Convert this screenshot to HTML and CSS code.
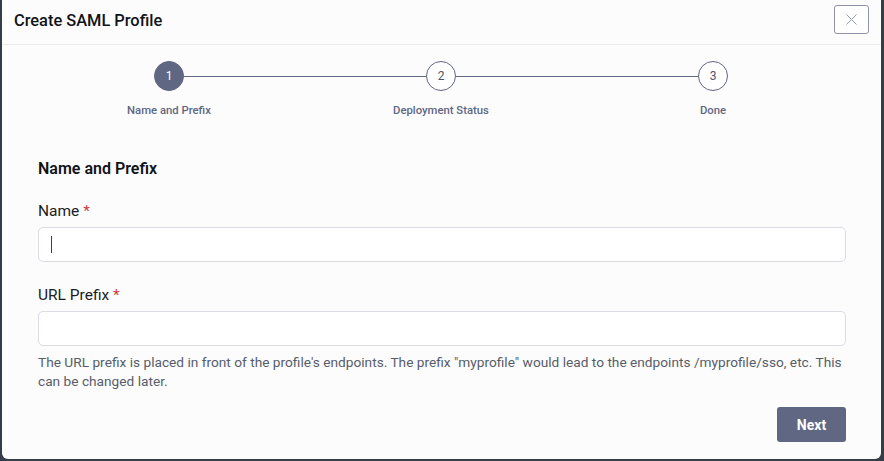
FILE: index.html
```html
<!DOCTYPE html>
<html lang="en">
<head>
<meta charset="utf-8">
<title>Create SAML Profile</title>
<link rel="stylesheet" href="styles.css">
</head>
<body>
<div class="modal">
  <div class="modal-header">
    <h1 class="modal-title">Create SAML Profile</h1>
    <button class="close-btn" aria-label="Close">
      <svg width="11" height="11" viewBox="0 0 11 11"><path d="M0.5 0.5L10.5 10.5M10.5 0.5L0.5 10.5" stroke="#959bb0" stroke-width="1" fill="none"/></svg>
    </button>
  </div>
  <div class="stepper">
    <div class="step first">
      <div class="step-track"><span class="track-line"></span><span class="step-circle active">1</span><span class="track-line"></span></div>
      <div class="step-label">Name and Prefix</div>
    </div>
    <div class="step">
      <div class="step-track"><span class="track-line"></span><span class="step-circle">2</span><span class="track-line"></span></div>
      <div class="step-label">Deployment Status</div>
    </div>
    <div class="step last">
      <div class="step-track"><span class="track-line"></span><span class="step-circle">3</span><span class="track-line"></span></div>
      <div class="step-label">Done</div>
    </div>
  </div>
  <div class="modal-body">
    <h2 class="section-title">Name and Prefix</h2>
    <div class="field">
      <label class="field-label">Name <span class="req">*</span></label>
      <div class="input"><span class="caret"></span></div>
    </div>
    <div class="field">
      <label class="field-label">URL Prefix <span class="req">*</span></label>
      <div class="input"></div>
      <p class="help">The URL prefix is placed in front of the profile's endpoints. The prefix "myprofile" would lead to the endpoints /myprofile/sso, etc. This can be changed later.</p>
    </div>
    <div class="actions">
      <button class="btn-next">Next</button>
    </div>
  </div>
</div>
</body>
</html>
```
FILE: styles.css
```css
html, body {
  margin: 0;
  padding: 0;
}
body {
  background: #363c48;
  font-family: Roboto, "Liberation Sans", Arial, sans-serif;
  width: 884px;
  height: 461px;
  overflow: hidden;
}
.modal {
  margin: 0 3px 0 2px;
  height: 459px;
  background: #fcfcfc;
  border-radius: 0 0 6px 6px;
  display: flex;
  flex-direction: column;
}
.modal-header {
  height: 45px;
  box-sizing: border-box;
  border-bottom: 1px solid #ebebee;
  display: flex;
  align-items: flex-start;
  justify-content: space-between;
  padding: 0 12px 0 12px;
}
.modal-title {
  margin: 0;
  font-size: 16.4px;
  font-weight: 500;
  color: #111318;
  line-height: 20px;
  padding-top: 11px;
}
.close-btn {
  margin-top: 5px;
  width: 35px;
  height: 29px;
  border: 1px solid #8d93a8;
  border-radius: 3px;
  background: #fff;
  display: flex;
  align-items: center;
  justify-content: center;
  padding: 0;
}
.stepper {
  display: grid;
  grid-template-columns: repeat(3, 272px);
  justify-content: center;
  padding-top: 16px;
  margin-left: -1px;
}
.step {
  display: flex;
  flex-direction: column;
  align-items: center;
}
.step-track {
  display: flex;
  align-items: center;
  width: 100%;
  height: 30px;
}
.track-line {
  flex: 1;
  height: 1px;
  background: #5f6783;
}
.step.first .track-line:first-child,
.step.last .track-line:last-child {
  background: transparent;
}
.step-circle {
  width: 30px;
  height: 30px;
  box-sizing: border-box;
  border-radius: 50%;
  border: 1px solid #5f6783;
  background: #fff;
  color: #4d546b;
  font-size: 12px;
  display: flex;
  align-items: center;
  justify-content: center;
}
.step-circle.active {
  background: #5f6783;
  color: #fff;
}
.step-label {
  margin-top: 12px;
  font-size: 11.3px;
  line-height: 16px;
  font-weight: 500;
  color: #5f6783;
}
.modal-body {
  padding: 40px 35px 0 36px;
}
.section-title {
  margin: 0 0 22px;
  font-size: 16px;
  line-height: 20px;
  font-weight: 600;
  color: #111318;
}
.field {
  margin-bottom: 16px;
}
.field + .field {
  margin-top: 23px;
}
.field-label {
  display: block;
  font-size: 15.5px;
  line-height: 20px;
  color: #1a1c22;
  margin-bottom: 6px;
}
.req {
  color: #d23b3b;
}
.input {
  height: 35px;
  box-sizing: border-box;
  border: 1px solid #dadce2;
  border-radius: 5px;
  background: #fff;
  display: flex;
  align-items: center;
  padding-left: 12px;
}
.caret {
  width: 1px;
  height: 17px;
  background: #3b4050;
}
.help {
  margin: 7px 0 0;
  font-size: 13.7px;
  line-height: 19px;
  color: #575d69;
}
.actions {
  display: flex;
  justify-content: flex-end;
}
.btn-next {
  width: 69px;
  height: 35px;
  border: none;
  border-radius: 3px;
  background: #5f6783;
  color: #fff;
  font-family: Roboto, "Liberation Sans", Arial, sans-serif;
  font-size: 14px;
  font-weight: 700;
  padding: 0;
}
```
